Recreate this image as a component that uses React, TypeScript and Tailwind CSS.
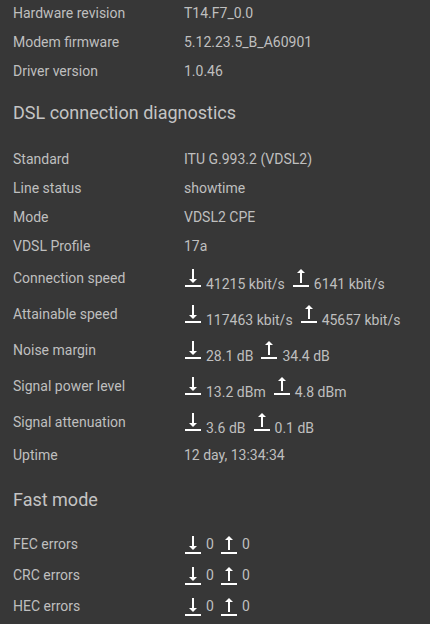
import React from "react";

const DownIcon = ({ className = "" }: { className?: string }) => (
  <svg viewBox="0 0 24 24" className={"w-6 h-6 fill-white shrink-0 " + className}>
    <path d="M16 13h-3V3h-2v10H8l4 4 4-4zM4 19v2h16v-2H4z" />
  </svg>
);

const UpIcon = ({ className = "" }: { className?: string }) => (
  <svg viewBox="0 0 24 24" className={"w-6 h-6 fill-white shrink-0 " + className}>
    <path d="M12 3l-4 4h3v10h2V7h3l-4-4zM4 19v2h16v-2H4z" />
  </svg>
);

function Row({ label, value, h = "h-[29px]" }: { label: string; value: React.ReactNode; h?: string }) {
  return (
    <div className={`flex items-center ${h}`}>
      <div className="w-[171px] shrink-0">{label}</div>
      <div>{value}</div>
    </div>
  );
}

function UpDown({ down, up }: { down: string; up: string }) {
  return (
    <div className="flex items-end leading-none">
      <DownIcon className="-ml-[3px] mb-[1px]" />
      <span className="ml-[1px]">{down}</span>
      <UpIcon className="ml-[4px] mb-[1px]" />
      <span className="ml-[1px]">{up}</span>
    </div>
  );
}

function Counter({ down, up }: { down: string; up: string }) {
  return (
    <div className="flex items-center">
      <DownIcon className="-ml-[3px]" />
      <span className="ml-[1px]">{down}</span>
      <UpIcon className="ml-[3px]" />
      <span className="ml-[1px]">{up}</span>
    </div>
  );
}

export default function App() {
  return (
    <div
      className="bg-[#373737] text-[#bfbfbf] text-[14px] w-[430px] h-[624px] overflow-hidden pl-[13px]"
      style={{ fontFamily: "Roboto, 'Liberation Sans', sans-serif" }}
    >
      <div className="-mt-[1.5px]">
        <Row label="Hardware revision" value="T14.F7_0.0" />
        <Row label="Modem firmware" value="5.12.23.5_B_A60901" />
        <Row label="Driver version" value="1.0.46" />
      </div>

      <h2 className="text-[18px] leading-6 text-[#c4c4c4] pt-[15.5px] pb-[19.5px]">DSL connection diagnostics</h2>

      <Row label="Standard" value="ITU G.993.2 (VDSL2)" />
      <Row label="Line status" value="showtime" />
      <Row label="Mode" value="VDSL2 CPE" />
      <Row label="VDSL Profile" value="17a" />
      <Row label="Connection speed" h="h-[36px]" value={<UpDown down="41215 kbit/s" up="6141 kbit/s" />} />
      <Row label="Attainable speed" h="h-[36px]" value={<UpDown down="117463 kbit/s" up="45657 kbit/s" />} />
      <Row label="Noise margin" h="h-[36px]" value={<UpDown down="28.1 dB" up="34.4 dB" />} />
      <Row label="Signal power level" h="h-[36px]" value={<UpDown down="13.2 dBm" up="4.8 dBm" />} />
      <Row label="Signal attenuation" h="h-[36px]" value={<UpDown down="3.6 dB" up="0.1 dB" />} />
      <Row label="Uptime" h="h-[30px]" value="12 day, 13:34:34" />

      <h2 className="text-[18px] leading-6 text-[#c4c4c4] pt-[17px] pb-[17.5px]">Fast mode</h2>

      <Row label="FEC errors" h="h-[31px]" value={<Counter down="0" up="0" />} />
      <Row label="CRC errors" h="h-[31px]" value={<Counter down="0" up="0" />} />
      <Row label="HEC errors" h="h-[31px]" value={<Counter down="0" up="0" />} />
    </div>
  );
}
